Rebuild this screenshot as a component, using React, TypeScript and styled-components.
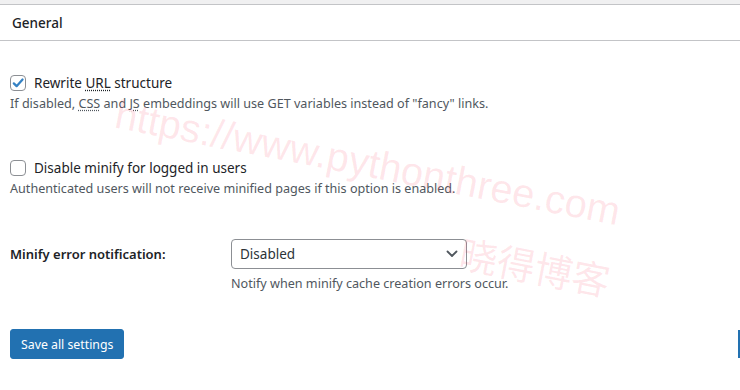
import React from "react";
import styled, { createGlobalStyle } from "styled-components";

const Global = createGlobalStyle`
  html, body { margin: 0; padding: 0; background: #fff; }
  body { font-family: "Noto Sans", "Open Sans", sans-serif; color: #1d2327; }
  * { box-sizing: border-box; }
`;

const Page = styled.div`
  position: relative;
  width: 740px;
  height: 390px;
  overflow: hidden;
  background: #fff;
`;

const TopStrip = styled.div`
  height: 5px;
  background: #f0f0f1;
  border-bottom: 1px solid #c3c4c7;
`;

const Header = styled.h2`
  margin: 0;
  height: 36px;
  padding: 0 12px;
  display: flex;
  align-items: center;
  font-size: 13.5px;
  font-weight: 500;
  color: #1d2327;
  border-bottom: 1px solid #c3c4c7;
`;

const Body = styled.div`
  padding: 34px 10px 0 10px;
  display: flex;
  flex-direction: column;
`;

const Option = styled.div<{ $gap: number }>`
  margin-bottom: ${(p) => p.$gap}px;
`;

const CheckRow = styled.label`
  display: flex;
  align-items: center;
  gap: 8px;
  height: 16px;
  font-size: 13.5px;
  color: #1d2327;
`;

const Box = styled.span`
  width: 16px;
  height: 16px;
  border: 1px solid #8c8f94;
  border-radius: 4px;
  background: #fff;
  display: flex;
  align-items: center;
  justify-content: center;
  flex: none;
`;

const Desc = styled.p<{ $mt?: number }>`
  margin: ${(p) => p.$mt ?? 4}px 0 0 0;
  font-size: 12.6px;
  line-height: 18px;
  color: #50575e;
`;

const Abbr = styled.abbr`
  text-decoration: underline dotted;
  text-underline-offset: 2px;
`;

const SelectRow = styled.div`
  display: grid;
  grid-template-columns: 221px 236px;
  align-items: center;
`;

const FieldLabel = styled.span`
  font-size: 13px;
  font-weight: 600;
  color: #1d2327;
`;

const SelectBox = styled.div`
  height: 30px;
  border: 1px solid #8c8f94;
  border-radius: 4px;
  display: flex;
  align-items: center;
  justify-content: space-between;
  padding: 0 8px 0 8px;
  font-size: 13.5px;
  color: #2c3338;
`;

const NotifyDesc = styled(Desc)`
  margin-left: 221px;
`;

const ButtonRow = styled.div`
  margin-top: 36px;
  display: flex;
  justify-content: space-between;
  align-items: center;
  margin-right: -10px;
`;

const PrimaryButton = styled.button`
  height: 30px;
  padding: 0 10px;
  background: #2271b1;
  border: 1px solid #2271b1;
  border-radius: 3px;
  color: #fff;
  font-family: inherit;
  font-size: 12.3px;
`;

const EdgeButton = styled.span`
  width: 2px;
  height: 28px;
  background: #2271b1;
`;

const Watermark = styled.div<{ $size: number }>`
  position: absolute;
  font-family: "Liberation Sans", "Noto Sans CJK SC", sans-serif;
  font-size: ${(p) => p.$size}px;
  color: rgba(250, 60, 90, 0.13);
  white-space: nowrap;
  transform-origin: left top;
  pointer-events: none;
`;

const Check = () => (
  <svg width="14" height="14" viewBox="0 0 20 20">
    <path d="M4 10.5l4 4L16.5 5" fill="none" stroke="#3582c4" strokeWidth="3.2" strokeLinecap="round" strokeLinejoin="round" />
  </svg>
);

const Chevron = () => (
  <svg width="12" height="8" viewBox="0 0 12 8">
    <path d="M1.5 1.5L6 6l4.5-4.5" fill="none" stroke="#50575e" strokeWidth="1.8" strokeLinecap="round" strokeLinejoin="round" />
  </svg>
);

export default function App() {
  return (
    <Page>
      <Global />
      <TopStrip />
      <Header>General</Header>
      <Body>
        <Option $gap={47}>
          <CheckRow>
            <Box><Check /></Box>
            <span>Rewrite <Abbr>URL</Abbr> structure</span>
          </CheckRow>
          <Desc>
            If disabled, <Abbr>CSS</Abbr> and <Abbr>JS</Abbr> embeddings will use GET variables instead of "fancy" links.
          </Desc>
        </Option>
        <Option $gap={41}>
          <CheckRow>
            <Box />
            <span>Disable minify for logged in users</span>
          </CheckRow>
          <Desc>Authenticated users will not receive minified pages if this option is enabled.</Desc>
        </Option>
        <SelectRow>
          <FieldLabel>Minify error notification:</FieldLabel>
          <SelectBox>
            <span>Disabled</span>
            <Chevron />
          </SelectBox>
        </SelectRow>
        <NotifyDesc $mt={6}>Notify when minify cache creation errors occur.</NotifyDesc>
        <ButtonRow>
          <PrimaryButton>Save all settings</PrimaryButton>
          <EdgeButton />
        </ButtonRow>
      </Body>
      <Watermark $size={40} style={{ left: 120, top: 92, transform: "rotate(11deg)" }}>
        https://www.pythonthree.com
      </Watermark>
      <Watermark $size={38} style={{ left: 466, top: 224, transform: "rotate(11deg)" }}>
        晓得博客
      </Watermark>
    </Page>
  );
}
